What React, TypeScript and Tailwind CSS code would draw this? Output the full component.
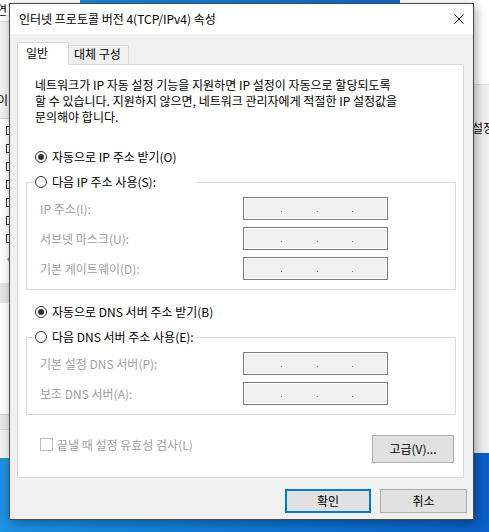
import React from 'react';

const Radio = ({ checked, label }: { checked?: boolean; label: string }) => (
  <div className="flex items-center gap-[5px] h-4">
    <span className="w-3 h-3 rounded-full border border-[#333333] bg-white flex items-center justify-center">
      {checked && <span className="w-[6px] h-[6px] rounded-full bg-[#333333]" />}
    </span>
    <span className="text-black leading-4">{label}</span>
  </div>
);

const IpField = () => (
  <div className="w-[145px] h-[23px] border border-[#7a7a7a] bg-[#f0f0f0] shadow-[inset_0_0_0_1px_#ffffff] flex items-start pl-[37px] pt-[13px]">
    <span className="w-px h-px bg-[#808080]" />
    <span className="w-px h-px bg-[#808080] ml-[35px]" />
    <span className="w-px h-px bg-[#808080] ml-[34px]" />
  </div>
);

const Group = ({ legend, rows }: { legend: string; rows: string[] }) => (
  <fieldset className="border border-[#dcdcdc] pl-[7px] pb-[9px]">
    <legend className="w-[163px] pl-px">
      <Radio label={legend} />
    </legend>
    <div className="mt-[7px] flex flex-col gap-[7px]">
      {rows.map((r) => (
        <div key={r} className="flex items-center">
          <span className="w-[209px] pl-[6px] text-[#a0a0a0] leading-4">{r}</span>
          <IpField />
        </div>
      ))}
    </div>
  </fieldset>
);

const App: React.FC = () => {
  return (
    <div className="relative w-[489px] h-[532px] overflow-hidden bg-gradient-to-r from-[#1b92e2] to-[#0a5ec6] font-['Noto_Sans_CJK_KR',sans-serif] text-[12px]">
      {/* left window behind */}
      <div className="absolute left-0 top-0 w-[80px] h-[458px] bg-[#f0f0f0]">
        <div className="h-[22px] bg-white border-b border-[#dadada] text-black leading-[20px] -ml-[4px]">연</div>
        <div className="mt-[70px] text-black leading-4 -ml-[3px]">이</div>
        <div className="mt-[10px] h-[165px] bg-white border-t border-[#d0d0d0] pl-[6px] pt-[7px] flex flex-col">
          {[0, 1, 2, 3, 4, 5, 6].map((i) => (
            <span key={i} className="w-[9px] h-[9px] border border-[#333333] mb-[9px]" />
          ))}
          <span className="text-[#606060] leading-3 pl-[1px]">‹</span>
        </div>
        <div className="h-[20px] bg-[#e4e4e4]" />
        <div className="h-[112px] bg-white border-b border-[#d0d0d0]" />
        <div className="h-[15px] bg-[#e8e8e8] border-b border-[#d6d6d6]" />
      </div>

      {/* right window behind */}
      <div className="absolute left-[400px] top-0 w-[89px] h-[453px] bg-[#f0f0f0]">
        <div className="h-[85px] bg-white border-b border-[#e0e0e0]" />
        <div className="mt-[35px] pl-[72px] text-black leading-4 whitespace-nowrap">설정</div>
      </div>

      {/* dialog */}
      <div className="absolute left-[9px] top-[3px] w-[465px] h-[517px] border border-[#4a4a4a] bg-[#f0f0f0] shadow-[2px_3px_10px_rgba(0,0,0,0.35)] flex flex-col">
        <div className="h-[30px] bg-white flex items-center justify-between pl-[9px] pr-[9px]">
          <span className="text-black leading-4">인터넷 프로토콜 버전 4(TCP/IPv4) 속성</span>
          <svg width="10" height="10" viewBox="0 0 10 10">
            <path d="M0.5 0.5 L9.5 9.5 M9.5 0.5 L0.5 9.5" stroke="#000" strokeWidth="1" />
          </svg>
        </div>

        <div className="flex-1 flex flex-col pt-[8px]">
          <div className="ml-[7px] mr-[9px]">
            <div className="flex items-end">
              <div className="relative z-10 -mb-px w-[52px] h-[23px] bg-white border border-b-0 border-[#d9d9d9] pl-[8px] pt-[2px] leading-4 text-black">
                일반
              </div>
              <div className="w-[60px] h-[19px] bg-[#f0f0f0] border border-l-0 border-b-0 border-[#d9d9d9] pl-[5px] leading-4 text-black whitespace-nowrap">
                대체 구성
              </div>
            </div>
            <div className="bg-white border border-[#d9d9d9] pl-[8px] pr-[7px] pt-[12px] pb-[14px]">
              <p className="ml-[9px] leading-4 text-black whitespace-nowrap">
                네트워크가 IP 자동 설정 기능을 지원하면 IP 설정이 자동으로 할당되도록
                <br />
                할 수 있습니다. 지원하지 않으면, 네트워크 관리자에게 적절한 IP 설정값을
                <br />
                문의해야 합니다.
              </p>
              <div className="ml-[9px] mt-[24px]">
                <Radio checked label="자동으로 IP 주소 받기(O)" />
              </div>
              <div className="mt-[9px]">
                <Group legend="다음 IP 주소 사용(S):" rows={['IP 주소(I):', '서브넷 마스크(U):', '기본 게이트웨이(D):']} />
              </div>
              <div className="ml-[9px] mt-[14px]">
                <Radio checked label="자동으로 DNS 서버 주소 받기(B)" />
              </div>
              <div className="mt-[9px]">
                <Group legend="다음 DNS 서버 주소 사용(E):" rows={['기본 설정 DNS 서버(P):', '보조 DNS 서버(A):']} />
              </div>
              <div className="mt-[20px] flex justify-between items-start">
                <div className="ml-[14px] mt-[2px] h-[15px] flex items-center gap-[4px]">
                  <span className="w-[13px] h-[13px] border border-[#bcbcbc] bg-white" />
                  <span className="text-[#a0a0a0] leading-[15px]">끝낼 때 설정 유효성 검사(L)</span>
                </div>
                <button className="mr-[2px] w-[82px] h-[28px] bg-[#e1e1e1] border border-[#adadad] text-black leading-4">
                  고급(V)...
                </button>
              </div>
            </div>
          </div>

          <div className="mt-[11px] flex justify-end gap-[9px] pr-[6px]">
            <button className="w-[86px] h-[24px] bg-[#e1e1e1] border-2 border-[#0078d7] text-black leading-4">확인</button>
            <button className="w-[87px] h-[24px] bg-[#e1e1e1] border border-[#adadad] text-black leading-4">취소</button>
          </div>
        </div>
      </div>
    </div>
  );
};

export default App;
